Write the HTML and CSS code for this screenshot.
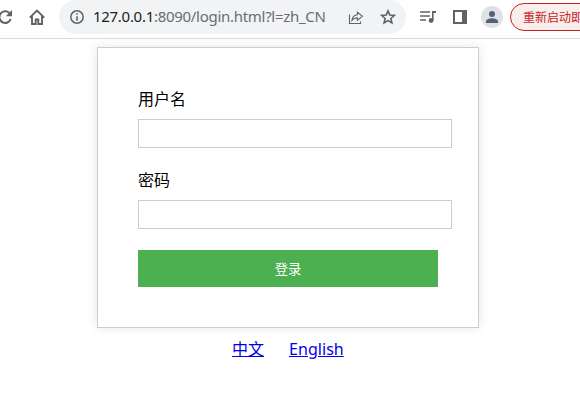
FILE: index.html
```
<!DOCTYPE html>
<html lang="zh-CN">
<head>
<meta charset="utf-8">
<title>登录</title>
<link rel="stylesheet" href="styles.css">
</head>
<body>
<header class="toolbar">
  <svg class="reload" width="13" height="16" viewBox="0 0 13 16"><path d="M10.3 4A5.8 5.8 0 1 0 11.7 10" fill="none" stroke="#5f6368" stroke-width="2"/><path d="M13 1v6.3H6.8z" fill="#5f6368"/></svg>
  <svg class="home" width="16" height="16" viewBox="0 0 16 16"><path d="M.8 8.6 8 1.6l7.2 7M3 7.3V15h3.7V10.5h2.6V15H13V7.3" fill="none" stroke="#5f6368" stroke-width="1.9"/></svg>
  <div class="omnibox">
    <svg class="info" width="14" height="14" viewBox="0 0 14 14"><circle cx="7" cy="7" r="6.2" fill="none" stroke="#5f6368" stroke-width="1.5"/><path d="M6.2 3.2h1.6v1.6H6.2zM6.2 6.2h1.6v4.6H6.2z" fill="#5f6368"/></svg>
    <div class="url"><span class="host">127.0.0.1</span>:8090/login.html?l=zh_CN</div>
    <svg class="share" width="16" height="16" viewBox="0 0 16 16"><path d="M1.5 5.5v9h11v-2M4 11.3c.4-3.5 2.2-5.2 5.4-5.5V3.1l5 4.2-5 4.1V8.9C7 8.8 5.3 9.6 4 11.3z" fill="none" stroke="#5f6368" stroke-width="1.1"/></svg>
    <svg class="star" width="16" height="16" viewBox="0 0 16 16"><path d="m8 1.9 1.8 4.2 4.5.4-3.4 3 1 4.4L8 11.6l-3.9 2.3 1-4.4-3.4-3 4.5-.4z" fill="none" stroke="#5f6368" stroke-width="1.6"/></svg>
  </div>
  <svg class="media" width="17" height="14" viewBox="0 0 17 14"><path d="M0 2h10M0 6h10M0 10h6" stroke="#5f6368" stroke-width="1.6"/><path d="M12 1h4v2h-2.4v7.5H12z" fill="#5f6368"/><circle cx="11.1" cy="10.5" r="2.4" fill="#5f6368"/></svg>
  <svg class="panel" width="14" height="14" viewBox="0 0 14 14"><path fill="#5f6368" fill-rule="evenodd" d="M0 0h14v14H0zM2 2v10h7V2z"/></svg>
  <svg class="avatar" width="22" height="22" viewBox="0 0 22 22"><circle cx="11" cy="11" r="11" fill="#dee1e6"/><circle cx="11" cy="7.9" r="3" fill="#56607a"/><path d="M5 17v-1.7c0-2 3.6-3.1 6-3.1s6 1.1 6 3.1V17z" fill="#56607a"/></svg>
  <div class="restart">重新启动即</div>
</header>
<main class="page">
  <form class="card">
    <label class="label" for="username">用户名</label>
    <input class="field" id="username" type="text">
    <label class="label" for="password">密码</label>
    <input class="field" id="password" type="password">
    <button class="submit" type="button">登录</button>
  </form>
  <nav class="languages"><a href="#zh">中文</a><a class="english" href="#en">English</a></nav>
</main>
</body>
</html>
```
FILE: styles.css
```
* { box-sizing: border-box; }
body {
  margin: 0;
  height: 404px;
  overflow: hidden;
  background: #fff;
  font-family: "Noto Sans", "Noto Sans CJK SC", sans-serif;
}
svg { display: block; flex: none; }
.toolbar {
  display: flex;
  align-items: center;
  height: 39px;
  padding-bottom: 4px;
  border-bottom: 1px solid #dadada;
  overflow: hidden;
}
.reload { margin-left: -1px; }
.home { margin-left: 17px; }
.omnibox {
  display: flex;
  align-items: center;
  flex: none;
  width: 347px;
  height: 34px;
  margin-left: 14px;
  padding-left: 11px;
  border-radius: 17px;
  background: #f1f3f4;
}
.url {
  width: 247px;
  margin-left: 9px;
  padding-bottom: 2px;
  color: #696d71;
  font-size: 15px;
  line-height: 32px;
  letter-spacing: -0.29px;
  white-space: nowrap;
}
.host { color: #202124; }
.share { margin-left: 8px; }
.star { margin-left: 16px; }
.media { margin-left: 14px; }
.panel { margin-left: 16px; }
.avatar { margin-left: 14px; }
.restart {
  flex: none;
  width: 130px;
  height: 28px;
  margin-left: 7px;
  padding-left: 12px;
  border: 1px solid #c5221f;
  border-radius: 14px;
  background: #f9eeec;
  color: #c5221f;
  font-size: 12px;
  line-height: 27px;
  white-space: nowrap;
}
.page { padding: 8px 0 0 97px; }
.card {
  display: flex;
  flex-direction: column;
  width: 382px;
  height: 281px;
  padding: 40px;
  border: 1px solid #ccc;
  box-shadow: 0 0 10px rgba(0, 0, 0, 0.1);
}
.label {
  height: 21px;
  margin-bottom: 10px;
  color: #000;
  font-size: 16px;
  line-height: 23px;
}
.field {
  width: 314px;
  height: 29px;
  margin: 0 0 21px;
  padding: 5px;
  border: 1px solid #ccc;
  background: #fff;
}
.submit {
  width: 300px;
  height: 37px;
  padding: 0;
  border: 0;
  background: #4caf50;
  color: #fff;
  font: 13.33px "Noto Sans", "Noto Sans CJK SC", sans-serif;
}
.languages {
  display: flex;
  gap: 25px;
  width: 382px;
  padding: 10px 0 0 135px;
  font-size: 16px;
  line-height: 22px;
}
.languages a { color: #00e; }
.english { letter-spacing: 0.05px; }
```
